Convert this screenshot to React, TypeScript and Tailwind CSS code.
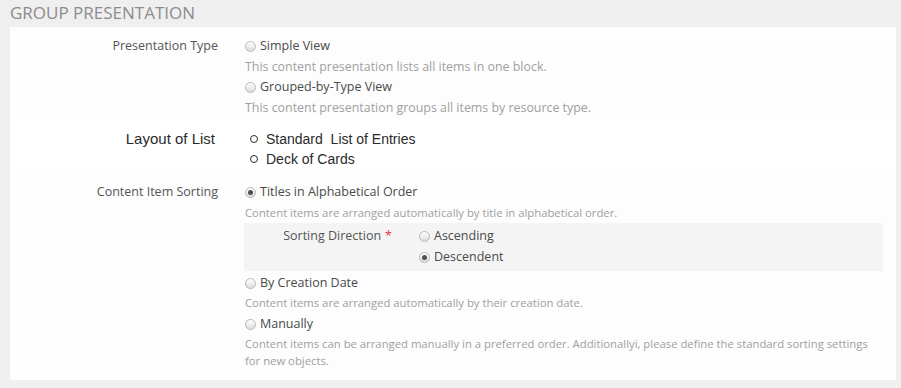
import React from "react";

function Radio({ checked }: { checked?: boolean }) {
  return (
    <span className="inline-flex h-[11px] w-[11px] shrink-0 items-center justify-center rounded-full border border-[#b8b8b8] bg-gradient-to-b from-[#ffffff] to-[#dcdcdc]">
      {checked ? <span className="h-[5px] w-[5px] rounded-full bg-[#505050]" /> : null}
    </span>
  );
}

function Option({ label, checked, h = "h-[21px]" }: { label: string; checked?: boolean; h?: string }) {
  return (
    <div className={`flex ${h} items-center gap-[4px] text-[12.5px] text-[#4a4a4a]`}>
      <Radio checked={checked} />
      <span>{label}</span>
    </div>
  );
}

function Desc({ children, h = "h-[20px]", size = "text-[12.4px]" }: { children: React.ReactNode; h?: string; size?: string }) {
  return <div className={`flex ${h} items-center whitespace-nowrap ${size} text-[#a0a0a0]`}>{children}</div>;
}

export default function App() {
  return (
    <div
      className="h-[388px] w-[901px] overflow-hidden bg-[#efefef]"
      style={{ fontFamily: '"Open Sans", "Noto Sans", sans-serif' }}
    >
      <div className="h-[27px] pl-[10px] pt-[1px] text-[17px] leading-[24px] text-[#8c8c8c]">GROUP PRESENTATION</div>
      <div className="ml-[10px] flex h-[353px] w-[886px] flex-col bg-[#fdfdfd]">
        {/* Presentation Type */}
        <div className="flex pt-[9px]">
          <div className="flex h-[21px] w-[208px] shrink-0 items-center justify-end text-[12.5px] text-[#555555]">
            Presentation Type
          </div>
          <div className="ml-[27px] flex flex-col">
            <Option label="Simple View" />
            <Desc>This content presentation lists all items in one block.</Desc>
            <Option label="Grouped-by-Type View" />
            <Desc>This content presentation groups all items by resource type.</Desc>
          </div>
        </div>

        {/* Pasted Layout of List band */}
        <div
          className="flex h-[52px] bg-[#ffffff] pt-[11px]"
          style={{ fontFamily: '"Liberation Sans", Arial, sans-serif' }}
        >
          <div className="flex h-[20px] w-[205px] shrink-0 items-center justify-end text-[15px] text-[#2a2a2a]">
            Layout of List
          </div>
          <div className="ml-[35px] flex flex-col text-[14px] text-[#2a2a2a]">
            <div className="flex h-[20px] items-center gap-[8px]">
              <span className="inline-block h-[8px] w-[8px] rounded-full border-[1.5px] border-[#2a2a2a]" />
              <span>Standard&nbsp; List of Entries</span>
            </div>
            <div className="flex h-[20px] items-center gap-[8px]">
              <span className="inline-block h-[8px] w-[8px] rounded-full border-[1.5px] border-[#2a2a2a]" />
              <span>Deck of Cards</span>
            </div>
          </div>
        </div>

        {/* Content Item Sorting */}
        <div className="flex pt-[12px]">
          <div className="flex h-[21px] w-[208px] shrink-0 items-center justify-end text-[12.5px] text-[#555555]">
            Content Item Sorting
          </div>
          <div className="ml-[27px] flex w-[638px] flex-col">
            <Option label="Titles in Alphabetical Order" checked />
            <Desc size="text-[11.3px]">Content items are arranged automatically by title in alphabetical order.</Desc>
            <div className="-ml-[1px] flex h-[48px] bg-[#f4f4f4] pt-[3px]">
              <div className="flex h-[21px] w-[148px] shrink-0 items-center justify-end text-[12.5px] text-[#555555]">
                Sorting Direction<span className="ml-[4px] text-[#e04040]">*</span>
              </div>
              <div className="ml-[27px] flex flex-col">
                <Option label="Ascending" />
                <Option label="Descendent" checked />
              </div>
            </div>
            <div className="mt-[2px]">
              <Option label="By Creation Date" />
            </div>
            <Desc h="h-[19px]" size="text-[11.3px]">Content items are arranged automatically by their creation date.</Desc>
            <div className="mt-[1px]">
              <Option label="Manually" />
            </div>
            <div className="whitespace-nowrap text-[11.3px] leading-[17px] text-[#a0a0a0]">
              Content items can be arranged manually in a preferred order. Additionallyi, please define the standard sorting settings
              <br />
              for new objects.
            </div>
          </div>
        </div>
      </div>
    </div>
  );
}
